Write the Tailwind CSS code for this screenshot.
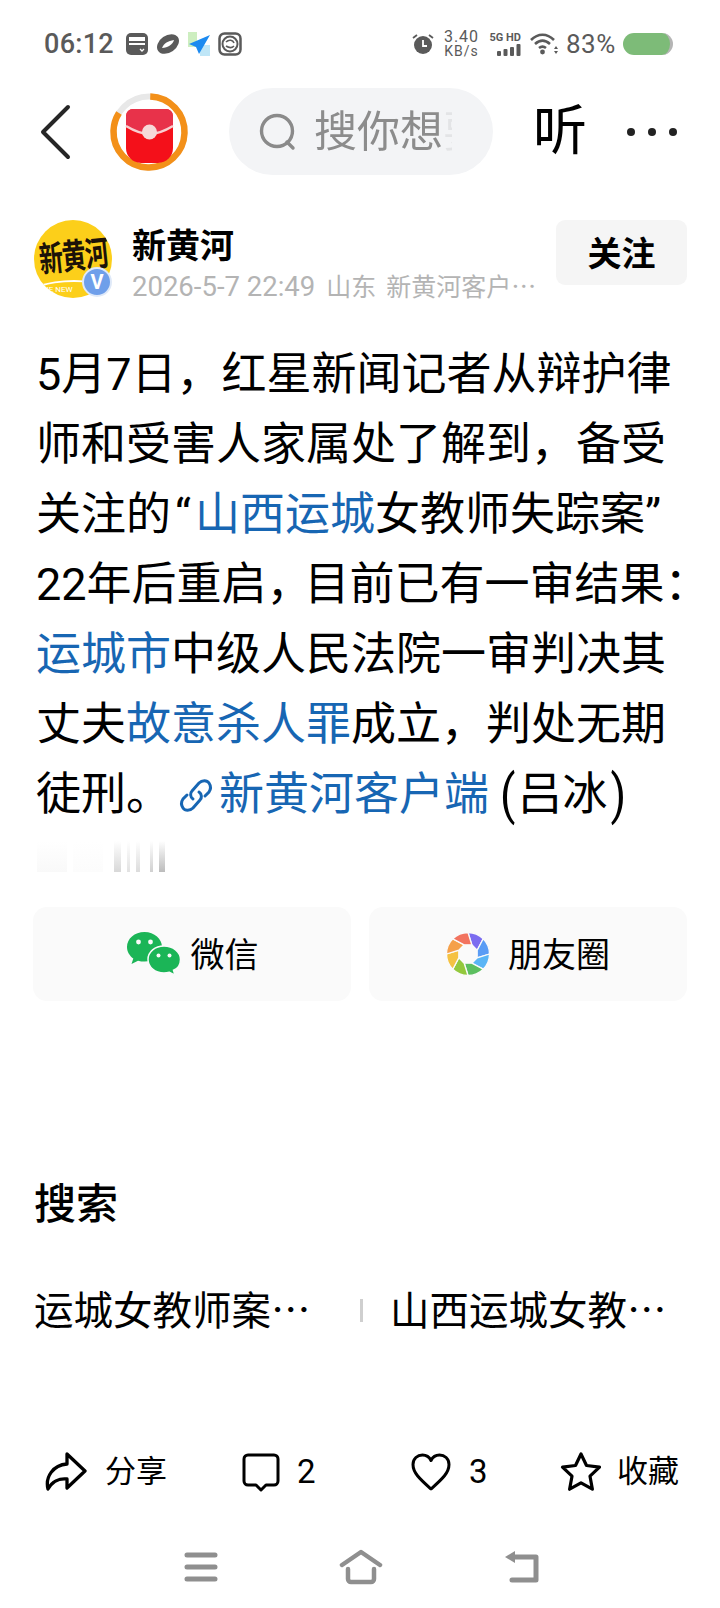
<!DOCTYPE html>
<html lang="zh-CN">
<head>
<meta charset="utf-8">
<script src="https://cdn.jsdelivr.net/npm/@tailwindcss/browser@4"></script>
</head>
<body class="bg-white">
<div class="w-[720px] h-[1608px] overflow-hidden flex flex-col bg-white text-black font-['Roboto','Noto_Sans_CJK_SC',sans-serif]">

  <!-- status bar -->
  <div class="h-[88px] flex items-center pl-[44px] text-[#5a5a5a] shrink-0">
    <span class="text-[27px] font-medium tracking-[0.3px] w-[81px]">06:12</span>
    <div class="flex items-center gap-[7px]">
      <svg width="24" height="24" viewBox="0 0 24 24"><rect x="1" y="1" width="22" height="22" rx="5" fill="#5a5a5a"/><rect x="4" y="5" width="16" height="4" fill="#fff"/><rect x="4" y="11" width="16" height="2" fill="#fff"/><path d="M15 17l2 2 2-2" stroke="#fff" stroke-width="1.300" fill="none"/></svg>
      <svg width="24" height="24" viewBox="0 0 24 24"><ellipse cx="12" cy="12" rx="12" ry="8.500" transform="rotate(-35 12 12)" fill="#5a5a5a"/><path d="M6 16c2-5 6-7 12-8-1 4-6 8-12 8z" fill="#fff"/></svg>
      <svg width="24" height="26" viewBox="0 0 24 26"><rect x="1" y="1" width="9" height="15" fill="#cdeec0"/><rect x="13" y="14" width="10" height="11" fill="#bfe6f7"/><path d="M23 4L2 13l7 3 3 7z" fill="#1c8af0"/></svg>
      <svg width="24" height="24" viewBox="0 0 24 24"><rect x="1.500" y="1.500" width="21" height="21" rx="5" fill="none" stroke="#5a5a5a" stroke-width="2.500"/><circle cx="12" cy="12" r="7.500" fill="none" stroke="#5a5a5a" stroke-width="2"/><path d="M8 10c3-3 7-2 8 1M8 14c3 2 6 2 8 0" stroke="#5a5a5a" stroke-width="1.600" fill="none"/></svg>
    </div>
    <div class="ml-auto flex items-center mr-[47px]">
      <svg width="22" height="22" viewBox="0 0 22 22"><circle cx="11" cy="12" r="9" fill="#5a5a5a"/><path d="M11 7v6h4" stroke="#fff" stroke-width="1.800" fill="none"/><path d="M1 5l4-3M21 5l-4-3" stroke="#5a5a5a" stroke-width="1.800"/></svg>
      <div class="ml-[9px] w-[37px] flex flex-col items-center text-[16px] leading-[14px] tracking-[1px]"><span>3.40</span><span class="text-[14px]">KB/s</span></div>
      <div class="ml-[8px] w-[33px] flex flex-col items-end">
        <span class="text-[11px] leading-[11px] font-bold whitespace-nowrap">5G HD</span>
        <svg width="24" height="12" viewBox="0 0 24 12" class="mt-[1px]"><rect x="0" y="7" width="4" height="5" rx="1" fill="#5a5a5a"/><rect x="6.500" y="5" width="4" height="7" rx="1" fill="#5a5a5a"/><rect x="13" y="3" width="4" height="9" rx="1" fill="#5a5a5a"/><rect x="19.500" y="0" width="4" height="12" rx="1" fill="#5a5a5a"/></svg>
      </div>
      <svg width="29" height="24" viewBox="0 0 29 24" class="ml-[9px]"><path d="M1 8c7-7 16-7 23 0M5 12c5-4.500 10-4.500 15 0M9 16c2.500-2 4.500-2 7 0" stroke="#5a5a5a" stroke-width="2.600" fill="none"/><circle cx="12.500" cy="20" r="2.400" fill="#5a5a5a"/><path d="M26 14l-2 3h4zM26 22l-2-3h4z" fill="#5a5a5a"/></svg>
      <span class="ml-[7px] text-[26px] tracking-[0.5px] w-[57px]">83%</span>
      <div class="w-[50px] h-[22px] rounded-full bg-[#7dbb78] border-r-[3px] border-[#b5b5b5]"></div>
    </div>
  </div>

  <!-- nav -->
  <div class="h-[87px] flex items-center shrink-0 relative">
    <svg width="34" height="56" viewBox="0 0 34 56" class="ml-[39px]"><path d="M29 3L4 28l25 25" stroke="#262626" stroke-width="4" fill="none" stroke-linecap="round" stroke-linejoin="round"/></svg>
    <svg width="80" height="80" viewBox="0 0 80 80" class="ml-[36px]">
      <circle cx="40" cy="40" r="35.500" fill="none" stroke="#e8e8e8" stroke-width="6"/>
      <circle cx="40" cy="40" r="35.500" fill="none" stroke="#f39019" stroke-width="6.500" stroke-dasharray="186 223" pathLength="223" transform="rotate(-88 40 40)"/>
      <path d="M17 24a7 7 0 0 1 7-7h33a7 7 0 0 1 7 7v32a15 15 0 0 1-15 15H32a15 15 0 0 1-15-15z" fill="#f4101a"/>
      <path d="M17 24a7 7 0 0 1 7-7h33a7 7 0 0 1 7 7v11c-12 6-17 7-23.500 7S29 41 17 35z" fill="#e8324a"/>
      <path d="M17 34c10 6 17 8 23.500 8S54 40 64 34" fill="none" stroke="#f8cfd0" stroke-width="2.500"/>
      <circle cx="40.500" cy="40" r="7.500" fill="#f6d9d9"/>
    </svg>
    <div class="ml-[40px] w-[264px] h-[87px] rounded-full bg-[#f3f4f6] flex items-center pl-[29px] overflow-hidden">
      <svg width="40" height="40" viewBox="0 0 40 40" class="shrink-0"><circle cx="19" cy="19" r="15.500" fill="none" stroke="#8a8a8a" stroke-width="3.400"/><path d="M29 30l6 6" stroke="#8a8a8a" stroke-width="3.400" stroke-linecap="round"/></svg>
      <span class="ml-[16px] w-[138px] overflow-hidden text-[43px] text-[#8c8c8c] leading-[50px] whitespace-nowrap [mask-image:linear-gradient(to_right,black_128px,rgba(0,0,0,0.15)_131px)]">搜你想要的</span>
    </div>
    <span class="ml-[40px] text-[54px] leading-none">听</span>
    <div class="ml-[40px] flex gap-[13px]">
      <span class="size-[8px] rounded-full bg-[#222]"></span><span class="size-[8px] rounded-full bg-[#222]"></span><span class="size-[8px] rounded-full bg-[#222]"></span>
    </div>
  </div>

  <!-- author -->
  <div class="mt-[45px] h-[78px] flex shrink-0 relative">
    <div class="ml-[34px] relative size-[78px] rounded-full bg-[#fccf1a] overflow-hidden shrink-0 flex items-start justify-center">
      <span class="mt-[22px] text-[24px] leading-[30px] text-[#1c1208] tracking-[-1px] -rotate-6 scale-y-[1.45] font-bold whitespace-nowrap">新黄河</span>
      <div class="absolute left-[-10px] top-[60px] w-[100px] h-[40px] rounded-[50%] border-t-[2px] border-white"></div>
      <span class="absolute left-[9px] top-[65px] text-[8px] leading-[10px] text-white whitespace-nowrap">HE NEW</span>
    </div>
    <div class="absolute left-[82px] top-[47px] size-[30px] rounded-full bg-[#6f9fea] border-[2px] border-[#dfe9f8] flex items-center justify-center text-white font-bold text-[20px] leading-none">V</div>
    <div class="ml-[20px] flex flex-col w-[410px]">
      <span class="text-[34px] leading-[50px] font-bold mt-[1px]">新黄河</span>
      <span class="text-[25px] leading-[30px] mt-[-1px] text-[#b4b4b4] whitespace-nowrap"><span class="text-[27.500px]">2026-5-7 22:49</span><span class="ml-[11px]">山东</span><span class="ml-[10px]">新黄河客户<span class="font-['Noto_Sans_CJK_SC']">…</span></span></span>
    </div>
    <div class="ml-auto mr-[33px] w-[131px] h-[65px] pt-[3px] rounded-[9px] bg-[#f5f5f5] flex items-center justify-center text-[34px] font-bold">关注</div>
  </div>

  <!-- article -->
  <p class="mt-[42px] ml-[36px] w-[670px] text-[45px] leading-[70px] whitespace-nowrap shrink-0">5月7日，红星新闻记者从辩护律<br>师和受害人家属处了解到，备受<br>关注的<span class="ml-[4px] mr-[4px]">“</span><span class="text-[#1766b3]">山西运城</span>女教师失踪案”<br>22年后重启<span class="tracking-[-7px]">，</span>目前已有一审结果：<br><span class="text-[#1766b3]">运城市</span>中级人民法院一审判决其<br>丈夫<span class="text-[#1766b3]">故意杀人罪</span>成立，判处无期<br>徒刑。<svg width="38" height="38" viewBox="0 0 38 38" class="inline-block align-[-5px] ml-[6px] mr-[4px]"><g fill="none" stroke="#1766b3" stroke-width="3" stroke-linecap="round"><path d="M16 22c-3-2-3-6-1-8l7-8c3-3 8-3 10 0s2 6 0 9l-4 4"/><path d="M22 15c3 2 3 6 1 8l-7 8c-3 3-8 3-10 0s-2-6 0-9l4-4"/></g></svg><span class="text-[#1766b3]">新黄河客户端</span><span class="inline-block ml-[11px] mr-[2px] scale-y-[1.2]">(</span>吕冰<span class="inline-block ml-[3px] scale-y-[1.2]">)</span></p>

  <!-- faded image row -->
  <div class="mt-[11px] ml-[37px] h-[31px] w-[128px] flex gap-[6px] shrink-0">
    <span class="w-[30px] bg-gradient-to-b from-white to-[#f9f9f9]"></span>
    <span class="w-[30px] bg-gradient-to-b from-white to-[#fcfcfc] mr-[5px]"></span>
    <span class="w-[7px] bg-gradient-to-b from-white to-[#d8d8d8]"></span>
    <span class="w-[3px] bg-gradient-to-b from-white to-[#e2e2e2]"></span>
    <span class="w-[4px] bg-gradient-to-b from-white to-[#dcdcdc] mr-[4px]"></span>
    <span class="w-[3px] bg-gradient-to-b from-white to-[#d0d0d0]"></span>
    <span class="w-[6px] bg-gradient-to-b from-white to-[#bcbcbc]"></span>
  </div>

  <!-- share -->
  <div class="mt-[35px] mx-[33px] h-[94px] flex gap-[18px] shrink-0">
    <div class="flex-1 rounded-[14px] bg-[#fafafa] flex items-center justify-center">
      <svg width="56" height="46" viewBox="0 0 56 46" class="mr-[9px]">
        <path d="M18.500 1C8.500 1 1 7.700 1 16c0 4.700 2.500 8.700 6.300 11.500L5.500 33l6.500-3.300c2 .6 4.200 .9 6.500 .9C28.500 30.600 36 24 36 16S28.500 1 18.500 1z" fill="#1bb557"/>
        <path d="M38 15c-9 0-16 6-16 13.500S29 42 38 42c1.900 0 3.700-.3 5.400-.8l5.600 3-1.500-5C52 37.500 54.500 33.300 54.500 28.500 54.500 21 47 15 38 15z" fill="#1bb557" stroke="#fafafa" stroke-width="1.500"/>
        <circle cx="12.500" cy="11" r="2.400" fill="#fafafa"/><circle cx="24.500" cy="11" r="2.400" fill="#fafafa"/>
        <circle cx="32.500" cy="24.500" r="2" fill="#fafafa"/><circle cx="43.500" cy="24.500" r="2" fill="#fafafa"/>
      </svg>
      <span class="text-[34px] mt-[3px]">微信</span>
    </div>
    <div class="flex-1 rounded-[14px] bg-[#fafafa] flex items-center justify-center">
      <svg width="44" height="44" viewBox="-22 -22 44 44" class="mr-[18px]">
        <defs><path id="b" d="M0-21.500A21.500 21.500 0 0 1 15.200-15.200L9.200-3.800 3.800-9.200z"/></defs>
        <g stroke="#fafafa" stroke-width="1.300">
          <use href="#b" fill="#7b6cf0" transform="rotate(0)"/>
          <use href="#b" fill="#5a9cf5" transform="rotate(45)"/>
          <use href="#b" fill="#5ab5f5" transform="rotate(90)"/>
          <use href="#b" fill="#5cbf60" transform="rotate(135)"/>
          <use href="#b" fill="#93c83c" transform="rotate(180)"/>
          <use href="#b" fill="#f5c242" transform="rotate(225)"/>
          <use href="#b" fill="#f5a04a" transform="rotate(270)"/>
          <use href="#b" fill="#f2735f" transform="rotate(315)"/>
        </g>
      </svg>
      <span class="text-[34px] mt-[3px]">朋友圈</span>
    </div>
  </div>

  <!-- search -->
  <div class="mt-[179px] ml-[34px] h-[50px] text-[42px] font-medium leading-[50px] shrink-0">搜索</div>
  <div class="mt-[55px] h-[50px] flex items-center shrink-0 text-[39.500px] leading-[50px]">
    <span class="ml-[34px] w-[288px] whitespace-nowrap">运城女教师案<span class="font-['Noto_Sans_CJK_SC']">…</span></span>
    <span class="ml-[38px] w-[3px] h-[23px] bg-[#cfcfcf]"></span>
    <span class="ml-[27px] whitespace-nowrap">山西运城女教<span class="font-['Noto_Sans_CJK_SC']">…</span></span>
  </div>

  <!-- actions -->
  <div class="mt-[107px] h-[60px] flex items-center shrink-0 text-[31px]">
    <svg width="42" height="42" viewBox="0 0 42 42" class="ml-[45px] shrink-0"><path d="M22 3l18 17-18 17V28C14 27 7 31 3 38c-3-12 5-24 19-25z" fill="none" stroke="#000" stroke-width="3.300" stroke-linejoin="round"/></svg>
    <span class="ml-[18px] w-[136px]">分享</span>
    <svg width="40" height="40" viewBox="0 0 40 40" class="shrink-0"><path d="M7 3h26a4 4 0 0 1 4 4v22a4 4 0 0 1-4 4h-8l-5 5-5-5H7a4 4 0 0 1-4-4V7a4 4 0 0 1 4-4z" fill="none" stroke="#000" stroke-width="3" stroke-linejoin="round"/></svg>
    <span class="ml-[16px] w-[114px] text-[33px]">2</span>
    <svg width="40" height="40" viewBox="0 0 40 40" class="shrink-0"><path d="M20 37C9 27 2 21 2 12.500 2 6.500 6.500 3 11.500 3c3.800 0 6.800 2 8.500 5.500C21.700 5 24.700 3 28.500 3 33.500 3 38 6.500 38 12.500 38 21 31 27 20 37z" fill="none" stroke="#000" stroke-width="3" stroke-linejoin="round"/></svg>
    <span class="ml-[18px] w-[91px] text-[33px]">3</span>
    <svg width="42" height="42" viewBox="0 0 42 42" class="shrink-0"><path d="M21 3l5.500 11.500 13 1.700-9.500 9 2.400 13L21 31.800 9.600 38.200 12 25.200l-9.500-9 13-1.700z" fill="none" stroke="#000" stroke-width="3.200" stroke-linejoin="round"/></svg>
    <span class="ml-[15px]">收藏</span>
  </div>

  <!-- system nav -->
  <div class="mt-[45px] h-[40px] flex items-center shrink-0">
    <svg width="34" height="30" viewBox="0 0 34 30" class="ml-[184px]"><g stroke="#8f8f8f" stroke-width="5" stroke-linecap="round"><path d="M3 3h28M3 15h28M3 27h28"/></g></svg>
    <svg width="44" height="36" viewBox="0 0 44 36" class="ml-[121px]"><g fill="none" stroke="#8f8f8f" stroke-width="4.500" stroke-linecap="round" stroke-linejoin="round"><path d="M3 16L22 3l19 13"/><path d="M9 20v10a3 3 0 0 0 3 3h20a3 3 0 0 0 3-3V20"/></g></svg>
    <svg width="36" height="34" viewBox="0 0 36 34" class="ml-[121px]"><path d="M10 7h22v23H8" fill="none" stroke="#8f8f8f" stroke-width="5" stroke-linecap="round" stroke-linejoin="round"/><path d="M11 1v12L1 7z" fill="#8f8f8f"/></svg>
  </div>
</div>
</body>
</html>
